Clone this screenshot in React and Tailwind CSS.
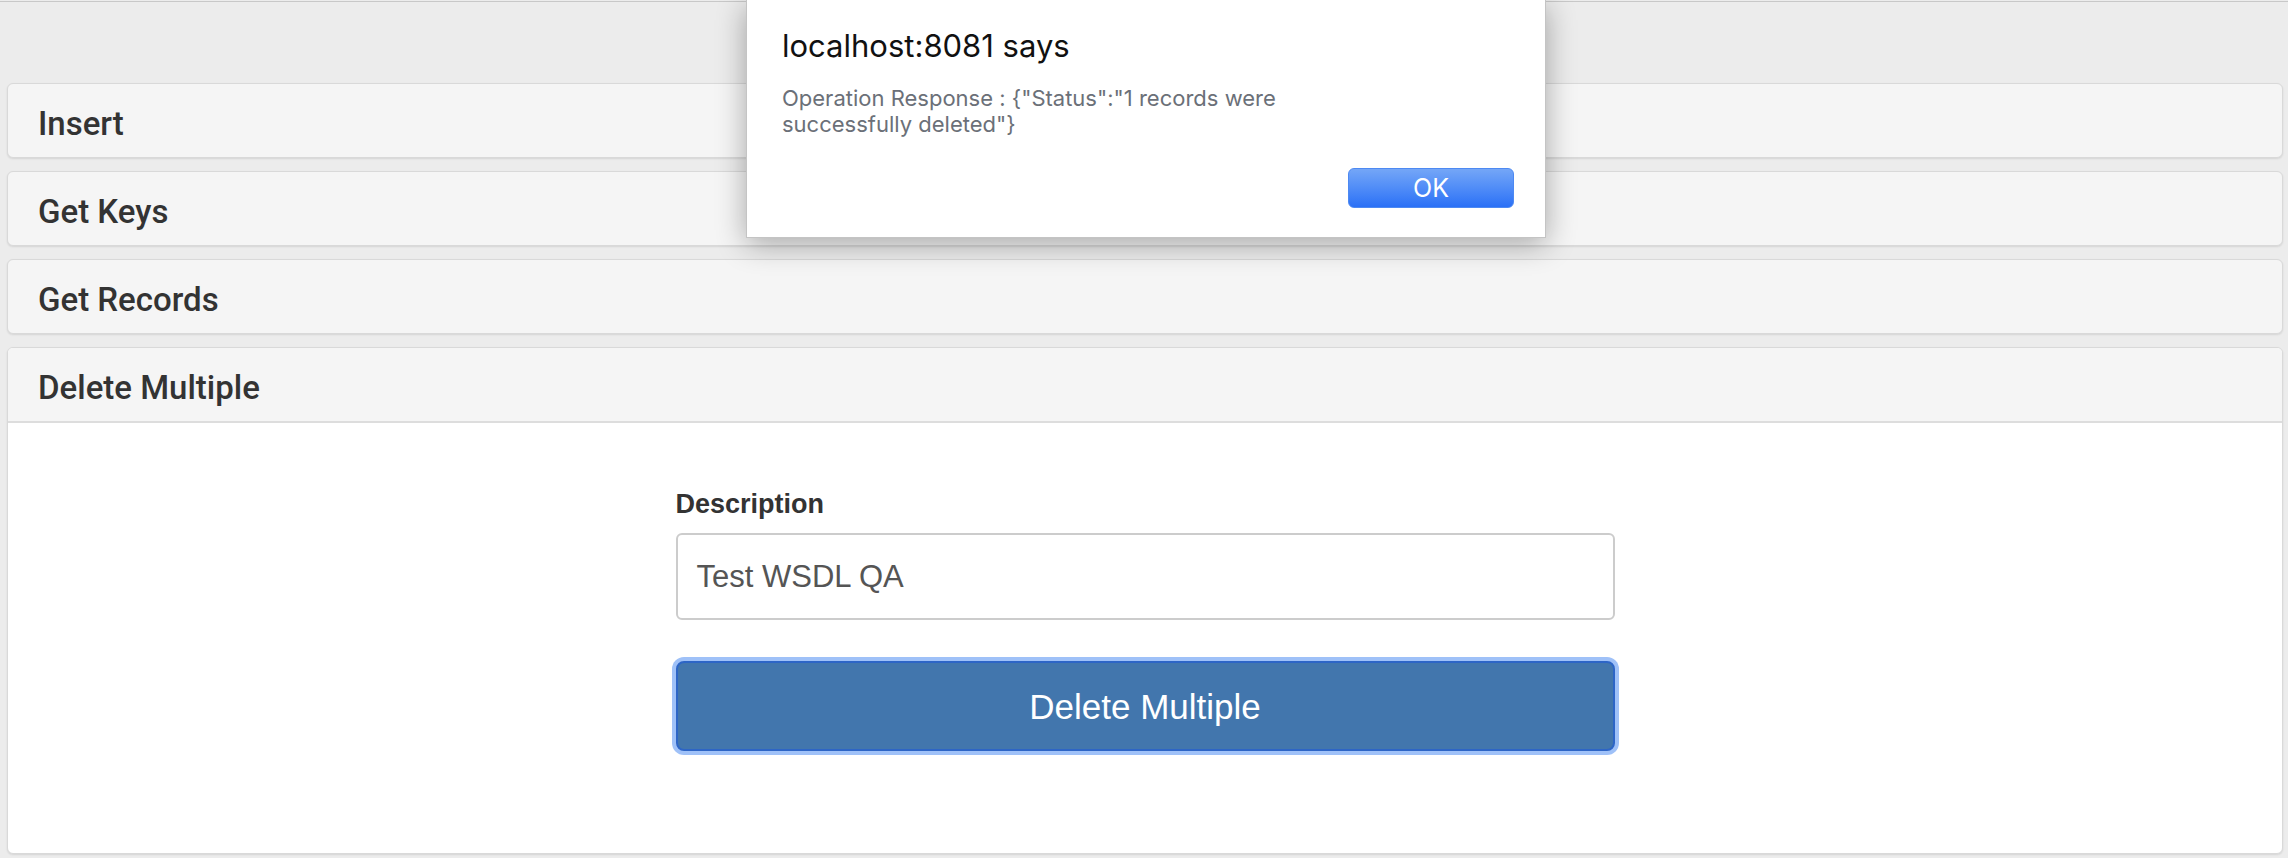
import React from "react";

function PanelHeader({ title }) {
  return (
    <div className="h-[73px] flex items-center pt-[5px] px-[30px]">
      <span className="font-['Roboto',sans-serif] font-medium text-[33px] leading-none text-[#333333]">
        {title}
      </span>
    </div>
  );
}

function CollapsedPanel({ title }) {
  return (
    <div className="border border-[#d9d9d9] rounded-[6px] bg-[#f5f5f5] shadow-[0_1px_2px_rgba(0,0,0,0.10)]">
      <PanelHeader title={title} />
    </div>
  );
}

export default function App() {
  return (
    <div className="relative w-[2288px] h-[858px] overflow-hidden bg-[#ececec]">
      <div className="h-[1px]" />
      <div className="h-[1px] bg-[#c8c8c8]" />
      <div className="h-[81px]" />
      <div className="ml-[7px] mr-[5px] flex flex-col gap-[13px]">
        <CollapsedPanel title="Insert" />
        <CollapsedPanel title="Get Keys" />
        <CollapsedPanel title="Get Records" />
        <div className="border border-[#d9d9d9] rounded-[6px] bg-white shadow-[0_1px_2px_rgba(0,0,0,0.10)] overflow-hidden">
          <div className="bg-[#f5f5f5] border-b-2 border-[#dddddd]">
            <PanelHeader title="Delete Multiple" />
          </div>
          <div className="pt-[66px] pb-[102px] flex justify-center">
            <div className="w-[939px] flex flex-col font-['Liberation_Sans',Arial,sans-serif]">
              <label className="font-bold text-[27px] leading-[30px] text-[#333333]">
                Description
              </label>
              <div className="mt-[14px] h-[87px] border-2 border-[#cccccc] rounded-[6px] bg-white flex items-center px-[19px]">
                <span className="text-[31px] text-[#555555] leading-none">Test WSDL QA</span>
              </div>
              <button className="mt-[41px] h-[90px] w-full rounded-[8px] bg-[#4276ad] border-2 border-[#2d65c6] shadow-[0_0_0_4px_#9fc1f8] text-white text-[35px] leading-none font-['Liberation_Sans',Arial,sans-serif]">
                Delete Multiple
              </button>
            </div>
          </div>
        </div>
      </div>

      {/* alert dialog */}
      <div className="absolute left-[746px] top-0 w-[800px] h-[238px] bg-white border-l border-r border-b border-[#c4c4c4] shadow-[0_6px_28px_rgba(0,0,0,0.32)] font-['Inter',sans-serif] px-[35px] pt-[28px]">
        <div className="text-[31px] leading-[36px] text-[#111111]">localhost:8081 says</div>
        <div className="mt-[21px] text-[22px] leading-[26px] text-[#6b7078]">
          Operation Response : {'{"Status":"1 records were'}
          <br />
          {'successfully deleted"}'}
        </div>
        <div className="flex justify-end mt-[31px]">
          <button className="-mr-[4px] w-[166px] h-[40px] rounded-[6px] bg-gradient-to-b from-[#74a6f7] to-[#2a70f6] text-white text-[25px] leading-none border border-[#4d89f2]">
            OK
          </button>
        </div>
      </div>
    </div>
  );
}
